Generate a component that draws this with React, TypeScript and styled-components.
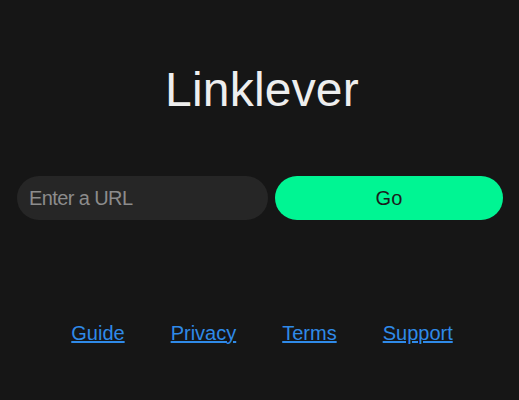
import React, { useState } from "react"
import styled, { createGlobalStyle } from "styled-components"

const GlobalStyle = createGlobalStyle`
	html, body {
		margin: 0;
		padding: 0;
		background: #161616;
	}
	body {
		font-family: "Liberation Sans", Arial, sans-serif;
	}
`

const links = ["Guide", "Privacy", "Terms", "Support"]

export default function App() {
	const [url, setUrl] = useState("")
	return <>
		<GlobalStyle/>
		<Page>
			<Title>Linklever</Title>
			<Form onSubmit={e => e.preventDefault()}>
				<UrlInput
					placeholder="Enter a URL"
					value={url}
					onChange={e => setUrl(e.target.value)}
				/>
				<GoButton type="submit">Go</GoButton>
			</Form>
			<Footer>
				{links.map(l => <FooterLink key={l} href="#">{l}</FooterLink>)}
			</Footer>
		</Page>
	</>
}

const Page = styled("main")`
	display: flex;
	flex-direction: column;
	align-items: stretch;
	width: 519px;
	height: 400px;
	box-sizing: border-box;
	padding: 62px 16px 0 17px;
	color: #eeeeee;
`
const Title = styled("h1")`
	margin: 0;
	padding-left: 4px;
	font-size: 48px;
	font-weight: 400;
	line-height: normal;
	text-align: center;
	letter-spacing: 0.2px;
	color: #eeeeee;
`
const Form = styled("form")`
	display: grid;
	grid-template-columns: 1.1fr 1fr;
	gap: 7px;
	margin-top: 59px;
`
const UrlInput = styled("input")`
	height: 44px;
	box-sizing: border-box;
	border: none;
	outline: none;
	border-radius: 22px;
	background: #262626;
	color: #eeeeee;
	padding: 0 12px;
	font-family: "Liberation Sans", Arial, sans-serif;
	font-size: 20px;
	letter-spacing: -0.6px;
	min-width: 0;
	&::placeholder {
		color: #8c8c8c;
	}
`
const GoButton = styled("button")`
	height: 44px;
	border: none;
	border-radius: 22px;
	background: #00f593;
	color: #1c1c1c;
	font-family: "Liberation Sans", Arial, sans-serif;
	font-size: 20px;
	cursor: pointer;
`
const Footer = styled("nav")`
	display: flex;
	justify-content: center;
	gap: 46px;
	margin-top: 102px;
	padding-left: 4px;
`
const FooterLink = styled("a")`
	font-size: 20px;
	line-height: normal;
	color: #2f8ae8;
	text-decoration: underline;
`
